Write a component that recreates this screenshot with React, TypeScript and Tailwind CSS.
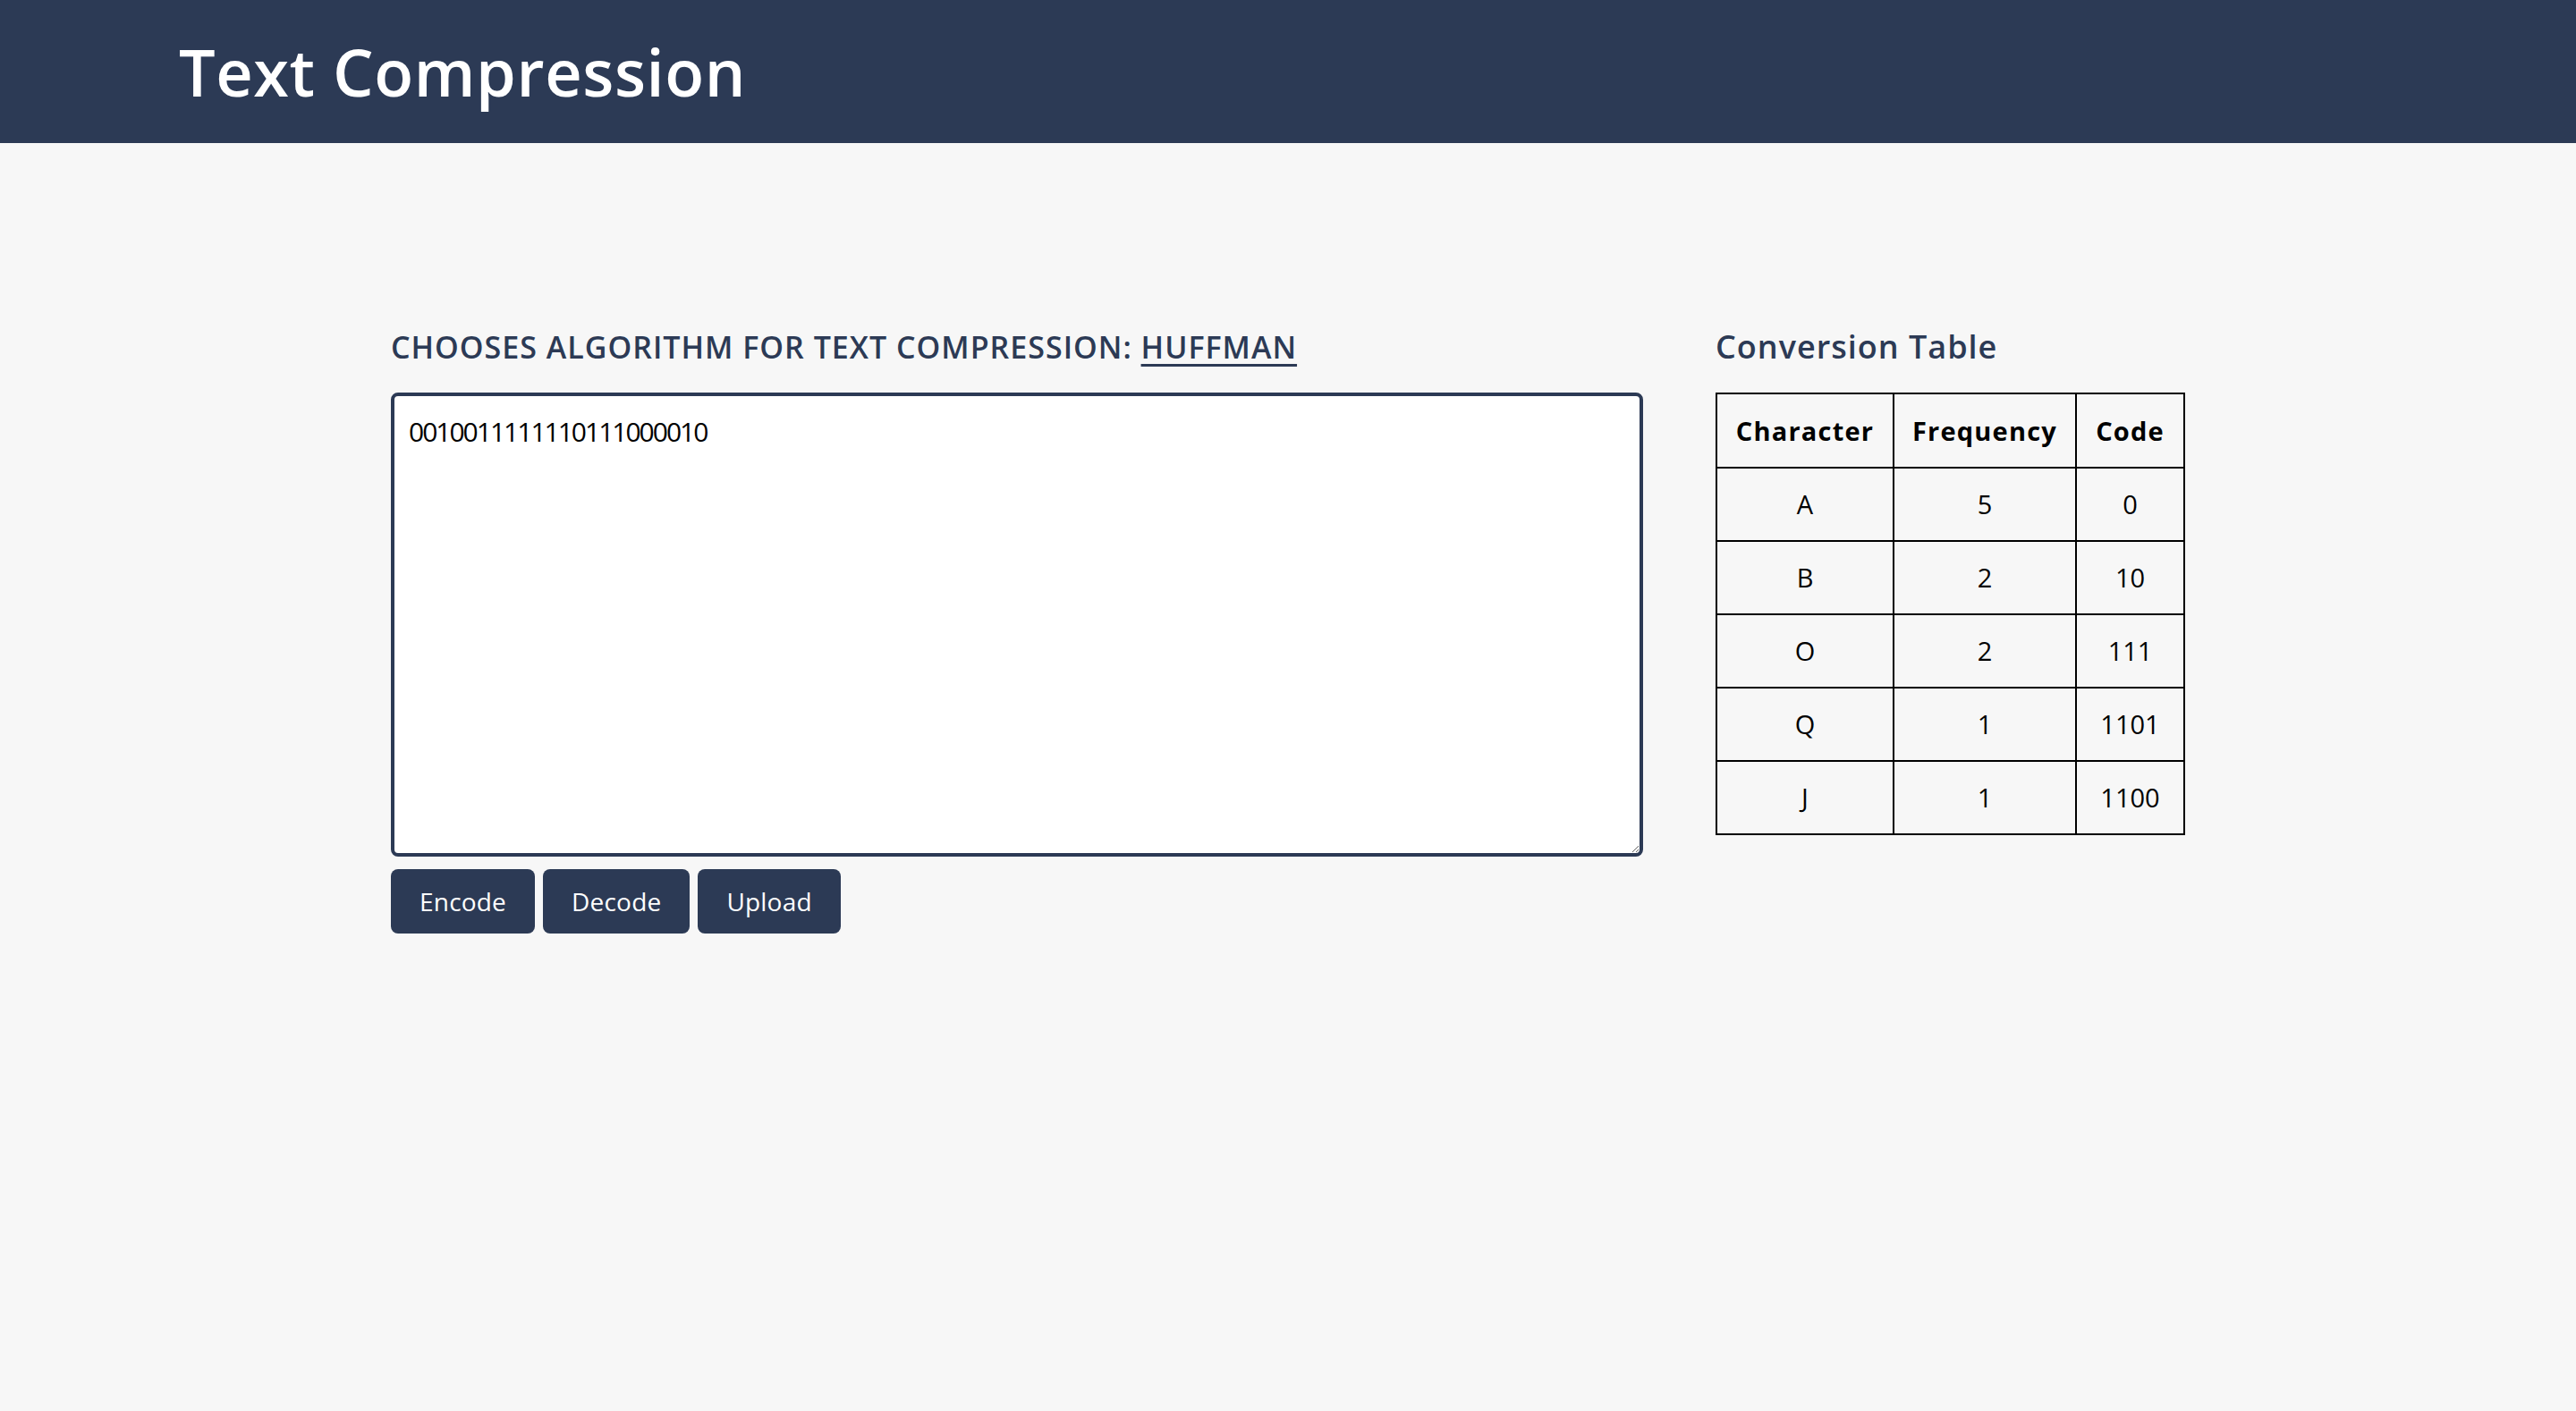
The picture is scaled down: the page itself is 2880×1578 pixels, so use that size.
import { useState } from "react";

const rows = [
  { ch: "A", freq: 5, code: "0" },
  { ch: "B", freq: 2, code: "10" },
  { ch: "O", freq: 2, code: "111" },
  { ch: "Q", freq: 1, code: "1101" },
  { ch: "J", freq: 1, code: "1100" },
];

export default function App() {
  const [text, setText] = useState("0010011111110111000010");

  return (
    <div className="min-h-screen bg-[#f7f7f7] font-['Open_Sans',sans-serif]">
      <header className="flex h-[160px] items-center bg-[#2c3a55] px-[200px]">
        <h1 className="text-[72px] font-semibold tracking-[0.6px] text-white">Text Compression</h1>
      </header>

      <main className="flex justify-center gap-[81px] pt-[204px]">
        <section className="w-[1400px]">
          <h2 className="text-[34px] leading-[48px] font-semibold tracking-[1px] text-[#2c3a55]">
            CHOOSES ALGORITHM FOR TEXT COMPRESSION:{" "}
            <span className="underline underline-offset-[6px]">HUFFMAN</span>
          </h2>
          <textarea
            className="mt-[27px] block h-[519px] w-full resize rounded-lg border-4 border-[#2c3a55] bg-white p-4 text-[30px] leading-[48px] tracking-[-2px] text-black outline-none"
            value={text}
            onChange={(e) => setText(e.target.value)}
          />
          <div className="mt-[14px] flex gap-[9px]">
            {["Encode", "Decode", "Upload"].map((label) => (
              <button
                key={label}
                type="button"
                className="h-[72px] rounded-lg bg-[#2c3a55] px-8 text-[28px] tracking-[0.2px] text-white"
              >
                {label}
              </button>
            ))}
          </div>
        </section>

        <section>
          <h2 className="text-[36px] leading-[48px] font-semibold tracking-[1px] text-[#2c3a55]">
            Conversion Table
          </h2>
          <table className="mt-[27px] border-collapse text-[29px] text-black">
            <thead>
              <tr className="h-[83px]">
                <th className="w-[198px] border-2 border-black px-3 font-bold tracking-[1.2px]">
                  Character
                </th>
                <th className="w-[204px] border-2 border-black px-3 font-bold tracking-[1.2px]">
                  Frequency
                </th>
                <th className="w-[121px] border-2 border-black px-3 font-bold tracking-[1.2px]">
                  Code
                </th>
              </tr>
            </thead>
            <tbody>
              {rows.map((r) => (
                <tr key={r.ch} className="h-[82px] text-center">
                  <td className="border-2 border-black px-4">{r.ch}</td>
                  <td className="border-2 border-black px-4">{r.freq}</td>
                  <td className="border-2 border-black px-4">{r.code}</td>
                </tr>
              ))}
            </tbody>
          </table>
        </section>
      </main>
    </div>
  );
}
